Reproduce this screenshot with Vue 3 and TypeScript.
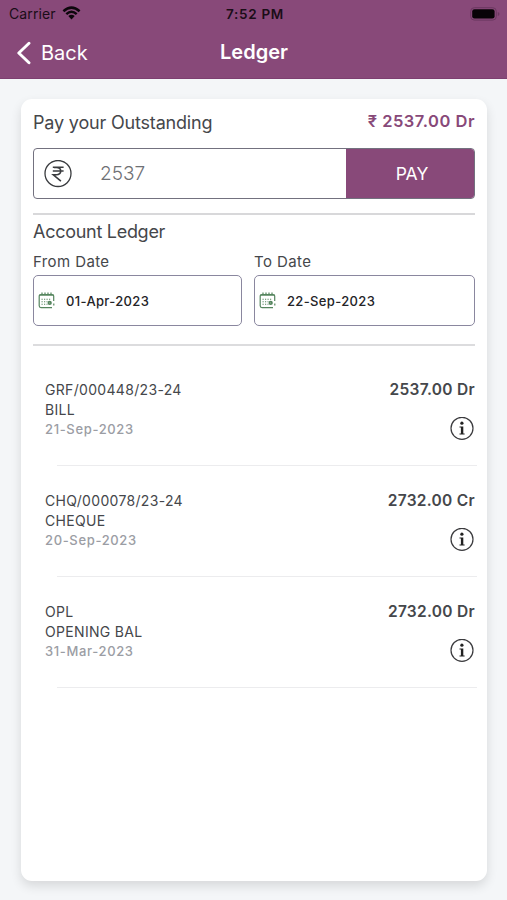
<script setup lang="ts">
interface Entry {
  reference: string
  kind: string
  date: string
  amount: string
}

interface DateField {
  label: string
  value: string
}

const dates: DateField[] = [
  { label: 'From Date', value: '01-Apr-2023' },
  { label: 'To Date', value: '22-Sep-2023' },
]

const entries: Entry[] = [
  { reference: 'GRF/000448/23-24', kind: 'BILL', date: '21-Sep-2023', amount: '2537.00 Dr' },
  { reference: 'CHQ/000078/23-24', kind: 'CHEQUE', date: '20-Sep-2023', amount: '2732.00 Cr' },
  { reference: 'OPL', kind: 'OPENING BAL', date: '31-Mar-2023', amount: '2732.00 Dr' },
]
</script>

<template>
  <div class="screen">
    <header class="header">
      <div class="status">
        <div class="carrier">
          <span class="carrier-name">Carrier</span>
          <svg class="wifi" width="19" height="14" viewBox="0 0 19 14">
            <path d="M1.4 5.2Q9.5-2 17.6 5.2M4.3 8.1Q9.5 3.5 14.7 8.1" fill="none" stroke="#0d070c" stroke-width="2.5" />
            <path d="M6.3 10Q9.5 7.4 12.7 10L9.5 13.4Z" fill="#0d070c" />
          </svg>
        </div>
        <span class="time">7:52 PM</span>
        <svg class="battery" width="31" height="14" viewBox="0 0 31 14">
          <rect x=".7" y=".7" width="25.6" height="12.4" rx="3.6" fill="none" stroke="#6b3860" />
          <rect x="2.2" y="2.2" width="22.4" height="9.4" rx="2.3" fill="#080307" />
          <path d="M27.8 5v4q1.7-.7 1.7-2t-1.7-2Z" fill="#6b3860" />
        </svg>
      </div>
      <nav class="nav">
        <button class="back" type="button">
          <svg width="16" height="24" viewBox="0 0 16 24">
            <path d="M14 2.2 3.8 12 14 21.8" fill="none" stroke="#fff" stroke-width="2.9" stroke-linecap="round" stroke-linejoin="round" />
          </svg>
          <span class="back-label">Back</span>
        </button>
        <h1 class="title">Ledger</h1>
        <span></span>
      </nav>
    </header>

    <main class="card">
      <section class="outstanding">
        <div class="outstanding-head">
          <h2 class="heading pay-heading">Pay your Outstanding</h2>
          <span class="due">₹ 2537.00 Dr</span>
        </div>
        <div class="pay-row">
          <div class="amount">
            <svg width="28" height="28" viewBox="0 0 28 28" fill="none" stroke="#3a3c3f">
              <circle cx="14" cy="13.5" r="13" stroke-width="1.3" />
              <path d="M8.8 7.2h10.8M8.8 11h10.8M10 7.5h2.5c5.6 0 5.6 7.3 0 7.3H9.3l7.6 6.4" stroke-width="1.6" />
            </svg>
            <span class="amount-value">2537</span>
          </div>
          <button class="pay" type="button"><span>PAY</span></button>
        </div>
      </section>

      <section class="filters">
        <h2 class="heading ledger-heading">Account Ledger</h2>
        <div class="dates">
          <div v-for="field in dates" :key="field.label" class="date-field">
            <span class="date-label">{{ field.label }}</span>
            <div class="date-box">
              <svg width="17" height="17" viewBox="0 0 17 17" fill="none" stroke="#55855e">
                <path d="M15.7 9V4Q15.7 2.5 14 2.5H3Q1.2 2.5 1.2 4.2v9.6q0 1.8 1.8 1.8h11" stroke-width="1.2" />
                <path d="M4 .6v3.2M7 .6v3.2M10 .6v3.2M13 .6v3.2M1.5 3.1h14" stroke-width="1.2" />
                <path d="M3.5 7.2h10M3.5 9.7h6M3.5 12.2h6" stroke-width="1.1" stroke-dasharray="1.2 1.3" />
                <circle cx="11.7" cy="10.9" r="1.3" stroke-width="1.7" />
                <path d="M15.8 11.5v1.9" stroke-width="1.2" />
              </svg>
              <span class="date-value">{{ field.value }}</span>
            </div>
          </div>
        </div>
      </section>

      <ul class="entries">
        <li v-for="entry in entries" :key="entry.reference" class="entry">
          <div class="entry-body">
            <div class="entry-info">
              <span class="entry-line">{{ entry.reference }}</span>
              <span class="entry-line">{{ entry.kind }}</span>
              <span class="entry-date">{{ entry.date }}</span>
            </div>
            <div class="entry-side">
              <span class="entry-amount">{{ entry.amount }}</span>
              <svg width="25" height="24" viewBox="0 0 25 24">
                <circle cx="12" cy="11.3" r="11" fill="none" stroke="#3b3b3e" stroke-width="1.2" />
                <circle cx="11.9" cy="6.2" r="1.6" fill="#222" />
                <path d="M9.5 9.4h3.8v7h1.3v1.1H9.5v-1.1h1.4v-5.9H9.5Z" fill="#222" />
              </svg>
            </div>
          </div>
        </li>
      </ul>
    </main>
  </div>
</template>

<style>
body {
  background: #f4f6f8;
}
</style>

<style scoped>
.screen {
  box-sizing: border-box;
  width: 100%;
  height: 900px;
  display: flex;
  flex-direction: column;
  background: #f4f6f8;
  font-family: Inter, "Liberation Sans", sans-serif;
  color: #45474b;
}

h1,
h2,
ul {
  margin: 0;
  padding: 0;
}

button {
  border: 0;
  padding: 0;
  font: inherit;
}

.header {
  box-sizing: border-box;
  height: 79px;
  flex: none;
  background: #884979;
  border-bottom: 1px solid #7d3f70;
}

.status,
.nav {
  display: grid;
  grid-template-columns: 1fr auto 1fr;
  align-items: center;
}

.status {
  height: 27px;
  padding: 0 6px 0 9px;
  color: #1a0d17;
}

.carrier {
  display: flex;
  align-items: center;
  gap: 6px;
}

.carrier-name {
  font-size: 14px;
  letter-spacing: 0.1px;
  line-height: 27px;
}

.wifi {
  margin-top: -1px;
}

.time {
  font-size: 13.5px;
  font-weight: 600;
  letter-spacing: 0.7px;
}

.battery {
  justify-self: end;
}

.nav {
  height: 50px;
  padding: 0 14px 0 15px;
  color: #fff;
}

.back {
  display: flex;
  align-items: center;
  gap: 10px;
  background: none;
  color: inherit;
}

.back-label {
  font-size: 20px;
}

.title {
  font-size: 20px;
  font-weight: 600;
  line-height: 51px;
}

.card {
  box-sizing: border-box;
  flex: 1;
  margin: 20px 20px 19px 21px;
  padding: 12px;
  border-radius: 11px;
  background: #fff;
  box-shadow: 0 5px 11px rgba(0, 0, 0, 0.12);
}

.outstanding {
  height: 102px;
  border-bottom: 2px solid #d8d8da;
}

.outstanding-head {
  display: flex;
  justify-content: space-between;
  height: 37px;
}

.heading {
  font-weight: 400;
  font-size: 18px;
  line-height: 23px;
}

.pay-heading {
  letter-spacing: -0.18px;
}

.ledger-heading {
  line-height: 25px;
  letter-spacing: -0.28px;
}

.due {
  color: #884979;
  font-size: 16.5px;
  font-weight: 600;
  line-height: 20px;
  letter-spacing: 0.5px;
}

.pay-row {
  box-sizing: border-box;
  display: flex;
  height: 51px;
  border: 1px solid #73717f;
  border-radius: 4px;
  overflow: hidden;
}

.amount {
  flex: 1;
  display: flex;
  align-items: center;
  gap: 28px;
  padding-left: 10px;
}

.amount-value {
  color: #6f7175;
  font-size: 19px;
  font-weight: 300;
}

.pay {
  width: 128px;
  padding-left: 4px;
  background: #884979;
  color: #fff;
  font-size: 17.5px;
}

.filters {
  height: 131px;
  box-sizing: border-box;
  padding-top: 4px;
  border-bottom: 2px solid #dcdcde;
}

.dates {
  display: grid;
  grid-template-columns: 209px 221px;
  justify-content: space-between;
  padding-top: 5px;
}

.date-field {
  display: flex;
  flex-direction: column;
}

.date-label {
  height: 26px;
  font-size: 15px;
  line-height: 25px;
  letter-spacing: 0.4px;
}

.date-box {
  box-sizing: border-box;
  display: flex;
  align-items: center;
  gap: 11px;
  height: 51px;
  padding-left: 4px;
  border: 1px solid #8a879f;
  border-radius: 5px;
}

.date-value {
  color: #242427;
  font-size: 13px;
  font-weight: 500;
  letter-spacing: 0.35px;
}

.entries {
  list-style: none;
  padding: 10px 0 0 12px;
}

.entry {
  height: 111px;
}

.entry-body {
  display: flex;
  justify-content: space-between;
  height: 109px;
  box-sizing: border-box;
  padding-top: 24px;
}

.entry::after {
  content: "";
  display: block;
  height: 1px;
  margin: 0 -2px 0 12px;
  background: #ececee;
}

.entry-info,
.entry-side {
  display: flex;
  flex-direction: column;
}

.entry-side {
  align-items: flex-end;
  gap: 17px;
}

.entry-line {
  font-size: 14px;
  line-height: 20px;
  letter-spacing: 0.32px;
}

.entry-date {
  color: #9b9da4;
  font-size: 13px;
  font-weight: 500;
  line-height: 18px;
  letter-spacing: 0.65px;
}

.entry-amount {
  font-size: 15.5px;
  font-weight: 600;
  line-height: 20px;
  letter-spacing: 0.3px;
}
</style>
